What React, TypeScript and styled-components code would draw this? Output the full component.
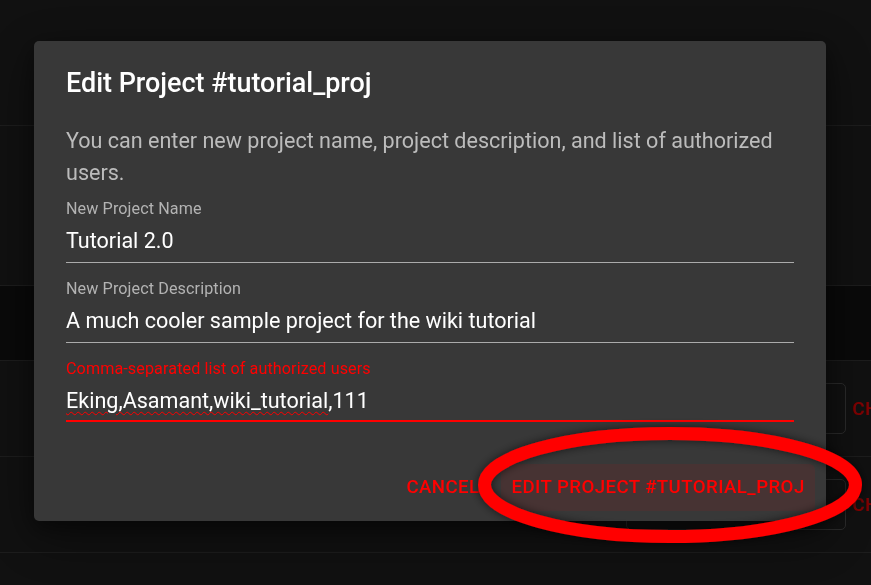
import React from "react";
import styled, { createGlobalStyle } from "styled-components";

const Global = createGlobalStyle`
  html, body { margin: 0; padding: 0; background: #222; }
  body { font-family: Roboto, "Noto Sans", "Liberation Sans", sans-serif; overflow: hidden; }
  * { box-sizing: border-box; }
`;

const Page = styled.div`
  width: 871px;
  height: 585px;
  overflow: hidden;
  background: #222;
  display: flex;
  flex-direction: column;
`;

const Band = styled.div<{ $h: number; $dark?: boolean }>`
  height: ${(p) => p.$h}px;
  flex: none;
  background: ${(p) => (p.$dark ? "#141414" : "#222")};
  border-bottom: 1px solid #3a3a3a;
`;

const Row = styled.div`
  height: 96px;
  flex: none;
  display: flex;
  align-items: center;
  border-bottom: 1px solid #3a3a3a;
`;

const Spacer = styled.div`
  flex: 1;
`;

const OutlinedBox = styled.div`
  width: 220px;
  height: 51px;
  flex: none;
  border: 1px solid #555;
  border-radius: 5px;
`;

const GhostButton = styled.div`
  width: 25px;
  flex: none;
  padding-left: 6px;
  white-space: nowrap;
  color: #ff0000;
  font-size: 18.67px;
  font-weight: 500;
  letter-spacing: 0.5px;
  text-transform: uppercase;
`;

const Backdrop = styled.div`
  position: fixed;
  inset: 0;
  background: rgba(0, 0, 0, 0.5);
  display: flex;
  align-items: flex-start;
  justify-content: flex-start;
  padding: 41px 0 0 34px;
`;

const Dialog = styled.div`
  width: 792px;
  background: #383838;
  border-radius: 5px;
  box-shadow: 0 15px 50px rgba(0, 0, 0, 0.45), 0 6px 18px rgba(0, 0, 0, 0.35);
  display: flex;
  flex-direction: column;
`;

const Title = styled.h2`
  margin: 0;
  padding: 21px 32px 0;
  font-size: 26.95px;
  line-height: 42.67px;
  font-weight: 500;
  color: #ffffff;
`;

const Content = styled.div`
  padding: 20px 32px 26px;
  display: flex;
  flex-direction: column;
`;

const Intro = styled.p`
  margin: 0;
  font-size: 21.55px;
  line-height: 32px;
  color: #bcbcbc;
`;

const Field = styled.div`
  margin: 10.67px 0 5.33px;
  display: flex;
  flex-direction: column;
`;

const Label = styled.label<{ $focused?: boolean }>`
  height: 21.33px;
  font-size: 16.15px;
  line-height: 19.33px;
  color: ${(p) => (p.$focused ? "#ff0000" : "#b3b3b3")};
  letter-spacing: 0.1px;
`;

const InputBox = styled.div<{ $focused?: boolean }>`
  height: ${(p) => (p.$focused ? "41.67px" : "42.67px")};
  padding: 5.33px 0 6.67px;
  border-bottom: ${(p) => (p.$focused ? "2.67px solid #ff0000" : "1px solid #ababab")};
  font-size: 21.55px;
  line-height: 30.67px;
  color: #ffffff;
  white-space: nowrap;
`;

const Misspelled = styled.span`
  text-decoration: underline wavy #ff0000;
  text-decoration-thickness: 1.2px;
  text-underline-offset: 3px;
`;

const Actions = styled.div`
  display: flex;
  justify-content: flex-end;
  align-items: center;
  gap: 10.67px;
  padding: 10px 10.67px;
`;

const TextButton = styled.button<{ $active?: boolean }>`
  height: 47px;
  padding: 0 10.67px;
  border: none;
  border-radius: 5.33px;
  background: ${(p) => (p.$active ? "rgba(255, 0, 0, 0.08)" : "transparent")};
  color: #ff0000;
  font-family: inherit;
  font-size: 18.67px;
  font-weight: 500;
  letter-spacing: 0.42px;
  text-transform: uppercase;
  cursor: pointer;
`;

const Annotation = styled.svg`
  position: fixed;
  left: 0;
  top: 0;
  width: 871px;
  height: 585px;
  pointer-events: none;
  overflow: visible;
`;

export default function App() {
  return (
    <>
      <Global />
      <Page>
        <Band $h={126} />
        <Band $h={160} />
        <Band $h={75} $dark />
        <Row>
          <Spacer />
          <OutlinedBox />
          <GhostButton>Change</GhostButton>
        </Row>
        <Row>
          <Spacer />
          <OutlinedBox />
          <GhostButton>Change</GhostButton>
        </Row>
      </Page>
      <Backdrop>
        <Dialog>
          <Title>Edit Project #tutorial_proj</Title>
          <Content>
            <Intro>
              You can enter new project name, project description, and list of authorized users.
            </Intro>
            <Field>
              <Label>New Project Name</Label>
              <InputBox>Tutorial 2.0</InputBox>
            </Field>
            <Field>
              <Label>New Project Description</Label>
              <InputBox>A much cooler sample project for the wiki tutorial</InputBox>
            </Field>
            <Field>
              <Label $focused>Comma-separated list of authorized users</Label>
              <InputBox $focused>
                <Misspelled>Eking,Asamant,wiki_tutorial</Misspelled>,111
              </InputBox>
            </Field>
          </Content>
          <Actions>
            <TextButton>Cancel</TextButton>
            <TextButton $active>Edit Project #tutorial_proj</TextButton>
          </Actions>
        </Dialog>
      </Backdrop>
      <Annotation viewBox="0 0 871 585">
        <defs>
          <filter id="shadow" x="-20%" y="-40%" width="140%" height="180%">
            <feDropShadow dx="0" dy="0" stdDeviation="5" floodColor="#000" floodOpacity="0.6" />
          </filter>
        </defs>
        <ellipse
          cx="670"
          cy="485"
          rx="185.5"
          ry="51.5"
          fill="none"
          stroke="#ff0000"
          strokeWidth="13"
          filter="url(#shadow)"
        />
      </Annotation>
    </>
  );
}
